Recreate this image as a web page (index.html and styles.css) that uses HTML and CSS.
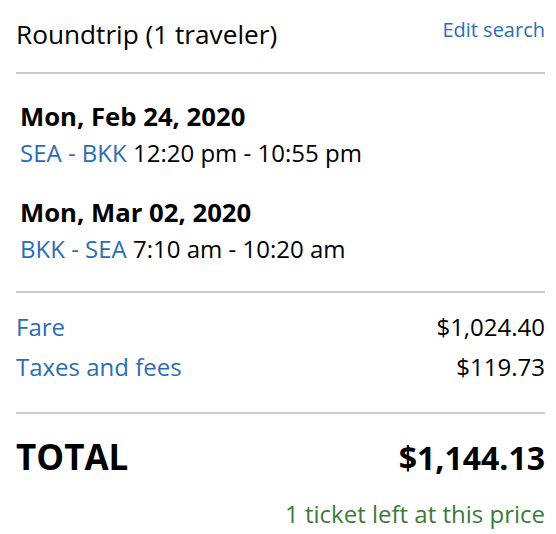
FILE: index.html
```html
<!DOCTYPE html>
<html lang="en">
<head>
<meta charset="utf-8">
<title>Trip summary</title>
<link rel="stylesheet" href="styles.css">
</head>
<body>
<div class="summary">
  <div class="header">
    <div class="title">Roundtrip (1 traveler)</div>
    <a class="edit" href="#">Edit search</a>
  </div>
  <div class="divider"></div>
  <div class="flights">
    <div class="leg">
      <div class="date">Mon, Feb 24, 2020</div>
      <div class="route"><span class="airports">SEA - BKK</span> 12:20 pm - 10:55 pm</div>
    </div>
    <div class="leg">
      <div class="date">Mon, Mar 02, 2020</div>
      <div class="route"><span class="airports">BKK - SEA</span> 7:10 am - 10:20 am</div>
    </div>
  </div>
  <div class="divider"></div>
  <div class="fees">
    <div class="row"><span class="label">Fare</span><span class="amount">$1,024.40</span></div>
    <div class="row"><span class="label">Taxes and fees</span><span class="amount">$119.73</span></div>
  </div>
  <div class="divider"></div>
  <div class="total">
    <span class="total-label">TOTAL</span>
    <span class="total-amount">$1,144.13</span>
  </div>
  <div class="notice">1 ticket left at this price</div>
</div>
</body>
</html>
```
FILE: styles.css
```css
body {
  margin: 0;
  background: #ffffff;
  color: #000000;
  font-family: "Open Sans", "Noto Sans", sans-serif;
}

.summary {
  padding: 0 11px 0 16px;
}

.header {
  display: flex;
  justify-content: space-between;
  align-items: flex-start;
  padding-top: 17px;
}

.title {
  font-size: 26.2px;
  line-height: 34px;
}

.edit {
  font-size: 20px;
  line-height: 26px;
  color: #2b6db4;
  text-decoration: none;
}

.divider {
  border-top: 2px solid #cccccc;
}

.header + .divider {
  margin-top: 21px;
}

.flights {
  padding: 25px 0 24px 4px;
}

.leg + .leg {
  margin-top: 24px;
}

.date {
  font-size: 25.7px;
  line-height: 36px;
  font-weight: 700;
}

.route {
  font-size: 24px;
  line-height: 36px;
}

.airports {
  color: #2b6db4;
}

.fees {
  padding: 14px 0 25px 0;
}

.row {
  display: flex;
  justify-content: space-between;
  font-size: 24px;
  line-height: 40px;
}

.label {
  color: #2b6db4;
}

.total {
  display: flex;
  justify-content: space-between;
  align-items: baseline;
  padding-top: 21px;
  font-weight: 700;
  line-height: 44px;
}

.total-label {
  font-size: 35px;
}

.total-amount {
  font-size: 32px;
}

.notice {
  margin-top: 18px;
  text-align: right;
  font-size: 24px;
  line-height: 32px;
  color: #3d7a3d;
}
```
